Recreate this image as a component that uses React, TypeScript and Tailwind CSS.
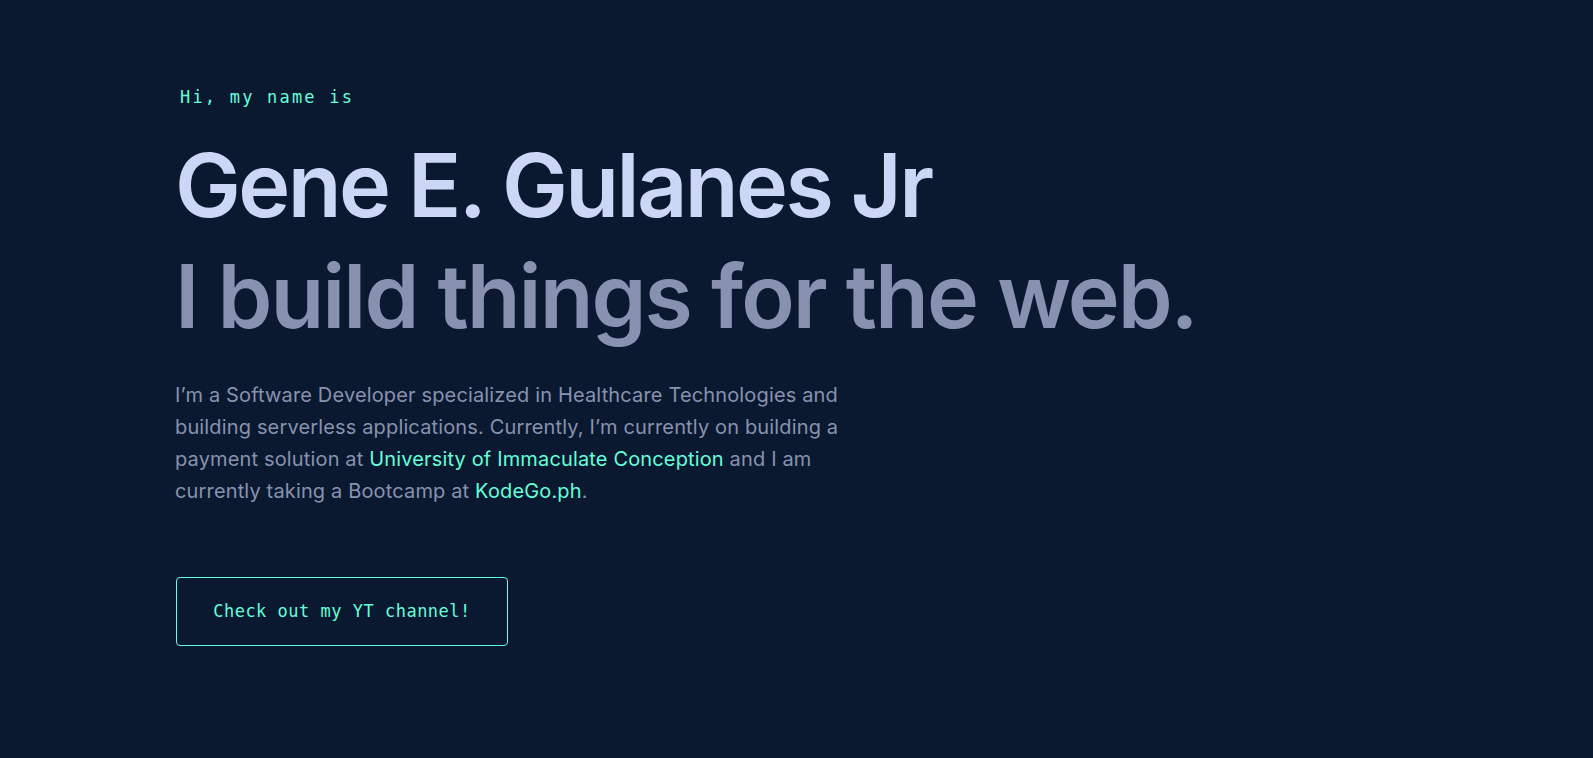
export default function App() {
  return (
    <div className="min-h-screen w-full bg-[#0a192f] pl-[175px]" style={{ fontFamily: 'Inter, "Noto Sans", sans-serif' }}>
      <div className="pt-[87px]">
        <p className="ml-[5px] text-[17px] leading-[20px] tracking-[2.2px] text-[#64ffda]" style={{ fontFamily: '"DejaVu Sans Mono", "Liberation Mono", monospace' }}>
          Hi, my name is
        </p>
        <h1 className="mt-[34px] text-[88px] font-semibold leading-[88px] tracking-[-2.6px] text-[#ccd6f6]">
          Gene E. Gulanes Jr
        </h1>
        <h2 className="mt-[23px] text-[88px] font-semibold leading-[88px] tracking-[-2px] text-[#8892b0]">
          I build things for the web.
        </h2>
        <p className="mt-[39px] text-[20px] leading-[32px] tracking-[0.15px] text-[#8892b0]">
          I’m a Software Developer specialized in Healthcare Technologies and
          <br />
          building serverless applications. Currently, I’m currently on building a
          <br />
          payment solution at <a className="text-[#64ffda]">University of Immaculate Conception</a> and I am
          <br />
          currently taking a Bootcamp at <a className="text-[#64ffda]">KodeGo.ph</a>.
        </p>
        <button
          className="ml-[1px] mt-[70px] flex h-[69px] w-[332px] items-center justify-center rounded-[4px] border border-[#64ffda] text-[17px] tracking-[0.5px] text-[#64ffda]"
          style={{ fontFamily: '"DejaVu Sans Mono", "Liberation Mono", monospace' }}
        >
          Check out my YT channel!
        </button>
      </div>
    </div>
  );
}
